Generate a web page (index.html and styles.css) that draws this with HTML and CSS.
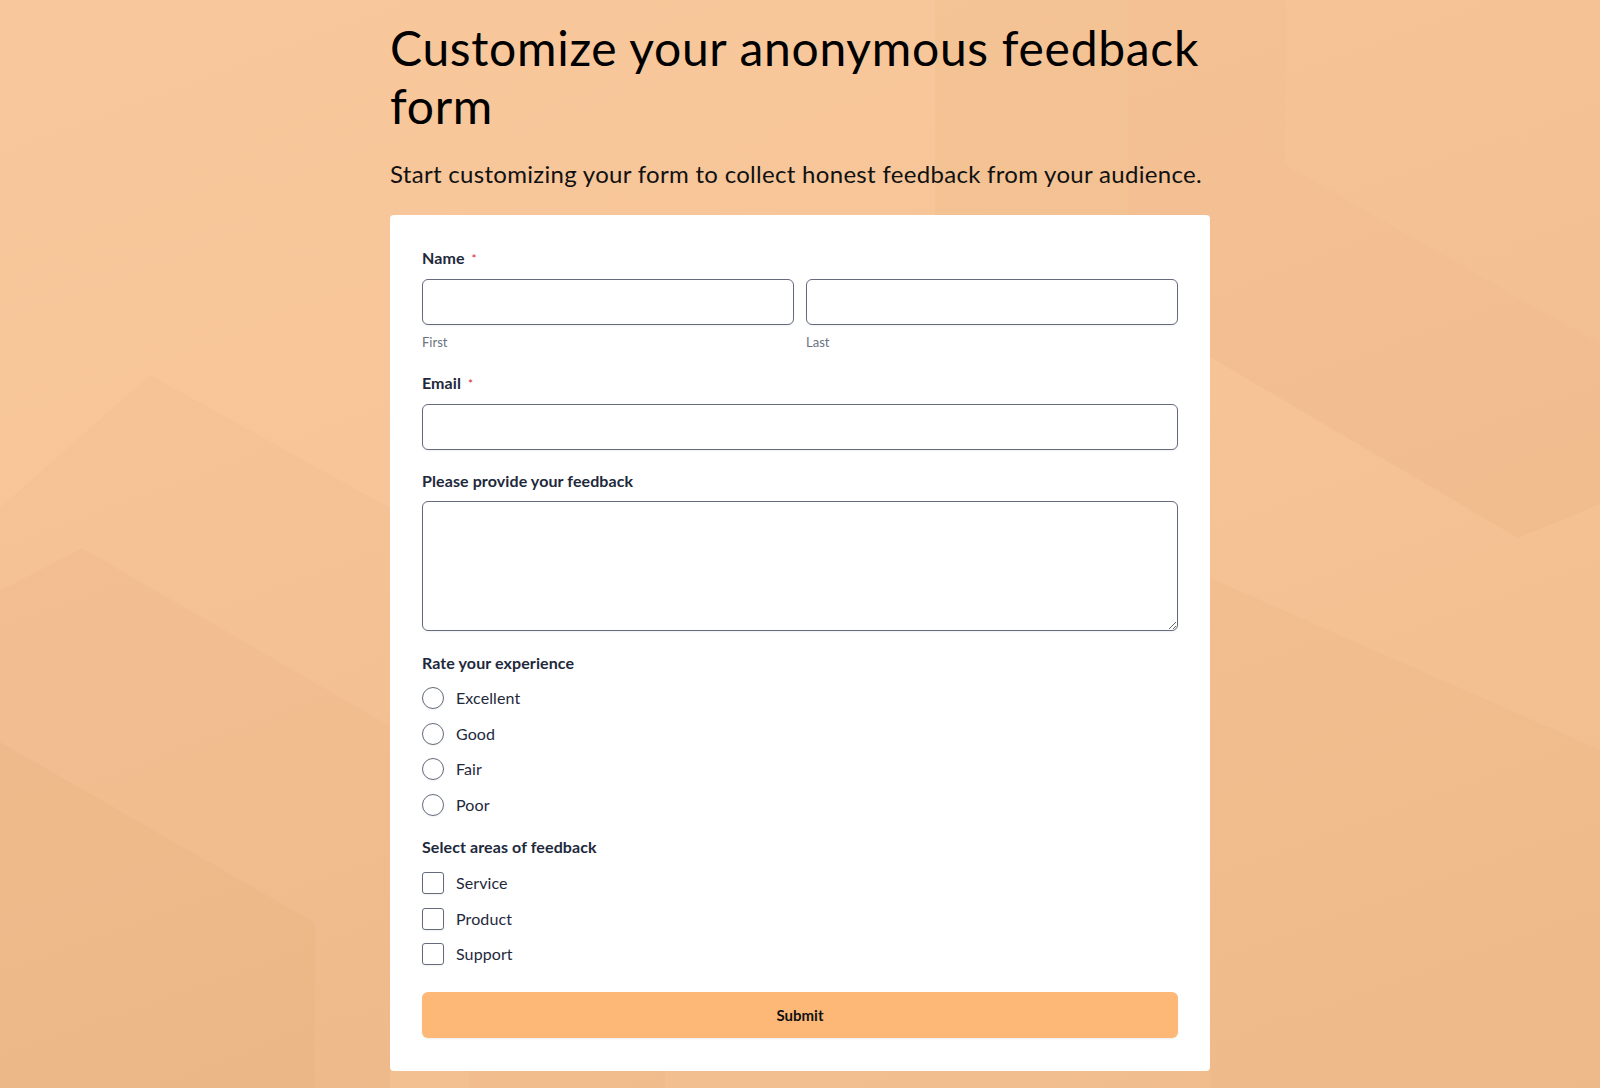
FILE: index.html
```html
<!DOCTYPE html>
<html lang="en">
<head>
<meta charset="utf-8">
<title>Customize your anonymous feedback form</title>
<link rel="stylesheet" href="styles.css">
</head>
<body>
<main class="page">
  <h1 class="title">Customize your anonymous feedback form</h1>
  <p class="subtitle">Start customizing your form to collect honest feedback from your audience.</p>
  <form class="card">
    <div class="field">
      <div class="label">Name <span class="req">*</span></div>
      <div class="name-row">
        <div class="name-col">
          <input class="input" type="text">
          <span class="hint">First</span>
        </div>
        <div class="name-col">
          <input class="input" type="text">
          <span class="hint">Last</span>
        </div>
      </div>
    </div>
    <div class="field">
      <div class="label">Email <span class="req">*</span></div>
      <input class="input" type="email">
    </div>
    <div class="field">
      <div class="label">Please provide your feedback</div>
      <textarea class="input textarea"></textarea>
    </div>
    <div class="field">
      <div class="label">Rate your experience</div>
      <div class="options">
        <label class="option"><input class="radio" type="radio" name="rate"><span>Excellent</span></label>
        <label class="option"><input class="radio" type="radio" name="rate"><span>Good</span></label>
        <label class="option"><input class="radio" type="radio" name="rate"><span>Fair</span></label>
        <label class="option"><input class="radio" type="radio" name="rate"><span>Poor</span></label>
      </div>
    </div>
    <div class="field">
      <div class="label">Select areas of feedback</div>
      <div class="options">
        <label class="option"><input class="check" type="checkbox"><span>Service</span></label>
        <label class="option"><input class="check" type="checkbox"><span>Product</span></label>
        <label class="option"><input class="check" type="checkbox"><span>Support</span></label>
      </div>
    </div>
    <button class="submit" type="button">Submit</button>
  </form>
</main>
</body>
</html>
```
FILE: styles.css
```css
html, body {
  margin: 0;
  padding: 0;
}

body {
  min-height: 1088px;
  font-family: Lato, "Noto Sans", "Liberation Sans", sans-serif;
  color: #1e293b;
  background-color: #f4c194;
  background-image:
    url("data:image/svg+xml;utf8,<svg xmlns='http://www.w3.org/2000/svg' viewBox='0 0 1600 1088' preserveAspectRatio='none'><g fill='%23b8682a'><polygon fill-opacity='0.035' points='935,0 1128,0 1128,240 935,240'/><polygon fill-opacity='0.045' points='1128,0 1285,0 1285,165 1600,344 1600,504 1518,538 1210,357 1210,240 1128,240'/><polygon fill-opacity='0.025' points='1285,0 1600,0 1600,344 1285,165'/><polygon fill-opacity='0.03' points='1210,578 1600,750 1600,1088 1210,1088'/><polygon fill-opacity='0.025' points='0,508 150,375 390,508 390,1088 0,1088'/><polygon fill-opacity='0.03' points='0,591 82,548 390,726 390,1088 0,1088'/><polygon fill-opacity='0.035' points='0,742 315,923 315,1088 0,1088'/><polygon fill-opacity='0.03' points='470,1069 665,1069 665,1088 470,1088'/></g></svg>"),
    linear-gradient(160deg, #f8c89c 0%, #f6c497 45%, #f0bc8c 100%);
  background-size: 100% 100%, 100% 100%;
  background-repeat: no-repeat;
}

.page {
  width: 820px;
  margin: 0 auto;
  padding-top: 19px;
}

.title {
  margin: 0;
  font-family: Lato, "Noto Sans", sans-serif;
  font-weight: 400;
  font-size: 48px;
  line-height: 1.2;
  color: #000;
  letter-spacing: 0.7px;
}

.subtitle {
  margin: 22px 0 0;
  font-size: 24px;
  line-height: 36px;
  color: #111;
  letter-spacing: 0.3px;
  white-space: nowrap;
}

.card {
  margin-top: 23px;
  background: #fff;
  border-radius: 4px;
  padding: 32px 32px 33px;
  display: flex;
  flex-direction: column;
}

.field {
  display: flex;
  flex-direction: column;
  margin-bottom: 20.5px;
}

.label {
  font-size: 16px;
  line-height: 22px;
  font-weight: 700;
  color: #1e293b;
  margin-bottom: 9px;
  letter-spacing: 0.1px;
}

.req {
  color: #dc2626;
  font-size: 12px;
  font-weight: 400;
  margin-left: 3px;
  vertical-align: 1px;
}

.name-row {
  display: grid;
  grid-template-columns: 1fr 1fr;
  column-gap: 12px;
}

.name-col {
  display: flex;
  flex-direction: column;
}

.input {
  box-sizing: border-box;
  width: 100%;
  height: 46px;
  margin: 0;
  border: 1px solid #646b7a;
  border-radius: 6px;
  background: #fff;
  box-shadow: 0 1px 2px rgba(15, 23, 42, 0.06);
  font-family: inherit;
  font-size: 15px;
  padding: 0 12px;
  outline: none;
}

.textarea {
  height: 130px;
  padding: 10px 12px;
  resize: vertical;
  display: block;
}

.hint {
  margin-top: 8px;
  font-size: 13px;
  line-height: 18px;
  color: #6b7280;
}

.options {
  display: flex;
  flex-direction: column;
  gap: 13.6px;
  margin-top: 4.5px;
}

.option {
  display: flex;
  align-items: center;
  gap: 12px;
  font-size: 16px;
  line-height: 22px;
  color: #1e293b;
  letter-spacing: 0.1px;
}

.radio,
.check {
  appearance: none;
  -webkit-appearance: none;
  box-sizing: border-box;
  width: 22px;
  height: 22px;
  margin: 0;
  border: 1px solid #646b7a;
  background: #fff;
  box-shadow: 0 1px 2px rgba(15, 23, 42, 0.06);
  flex: none;
}

.radio {
  border-radius: 50%;
}

.check {
  border-radius: 3px;
}

.submit {
  margin-top: 6px;
  height: 46px;
  border: none;
  border-radius: 6px;
  background: #fdb877;
  color: #111;
  font-family: inherit;
  font-size: 15px;
  font-weight: 700;
  box-shadow: 0 1px 2px rgba(15, 23, 42, 0.08);
}
```
